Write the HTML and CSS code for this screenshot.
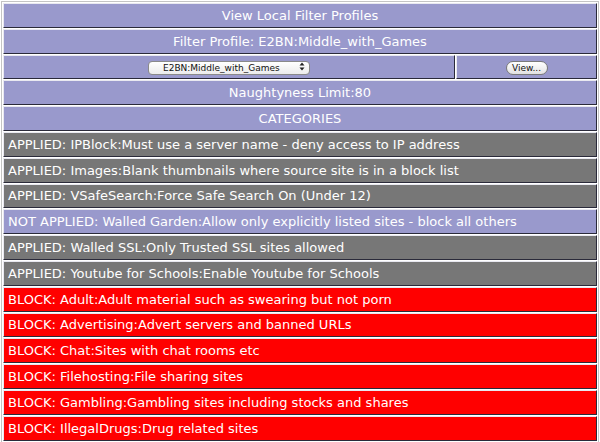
FILE: index.html
```html
<!DOCTYPE html>
<html>
<head>
	<title>Filter Profiles</title>
	<link rel="stylesheet" href="styles.css">
</head>
<body>
	<table class="profiles">
		<tr><td class="head" colspan="2">View Local Filter Profiles</td></tr>
		<tr><td class="head" colspan="2">Filter Profile: E2BN:Middle_with_Games</td></tr>
		<tr>
			<td class="head pick">
				<span class="select-wrap">
					<select class="select">
						<option>E2BN:Middle_with_Games</option>
					</select>
					<svg class="arrows" width="6" height="9" viewBox="0 0 6 9"><path d="M3 0.5L5.5 3.5H0.5Z M3 8.5L5.5 5.5H0.5Z" fill="#222"/></svg>
				</span>
			</td>
			<td class="head view"><button class="btn">View...</button></td>
		</tr>
		<tr><td class="head" colspan="2">Naughtyness Limit:80</td></tr>
		<tr><td class="head" colspan="2">CATEGORIES</td></tr>
		<tr><td class="cat applied" colspan="2">APPLIED: IPBlock:Must use a server name - deny access to IP address</td></tr>
		<tr><td class="cat applied" colspan="2">APPLIED: Images:Blank thumbnails where source site is in a block list</td></tr>
		<tr><td class="cat applied" colspan="2">APPLIED: VSafeSearch:Force Safe Search On (Under 12)</td></tr>
		<tr><td class="cat notapplied" colspan="2">NOT APPLIED: Walled Garden:Allow only explicitly listed sites - block all others</td></tr>
		<tr><td class="cat applied" colspan="2">APPLIED: Walled SSL:Only Trusted SSL sites allowed</td></tr>
		<tr><td class="cat applied" colspan="2">APPLIED: Youtube for Schools:Enable Youtube for Schools</td></tr>
		<tr><td class="cat block" colspan="2">BLOCK: Adult:Adult material such as swearing but not porn</td></tr>
		<tr><td class="cat block" colspan="2">BLOCK: Advertising:Advert servers and banned URLs</td></tr>
		<tr><td class="cat block" colspan="2">BLOCK: Chat:Sites with chat rooms etc</td></tr>
		<tr><td class="cat block" colspan="2">BLOCK: Filehosting:File sharing sites</td></tr>
		<tr><td class="cat block" colspan="2">BLOCK: Gambling:Gambling sites including stocks and shares</td></tr>
		<tr><td class="cat block" colspan="2">BLOCK: IllegalDrugs:Drug related sites</td></tr>
	</table>
</body>
</html>
```

FILE: styles.css
```css
body{
	margin: 1px;
	padding: 0;
	background: #fff;
	font-family: "DejaVu Sans", Verdana, sans-serif;
	color: #fff;
}
.profiles{
	width: 100%;
	border-collapse: separate;
	border-spacing: 1px;
	border: 1px solid #c4c4c4;
}
.profiles td{
	height: 22.8px;
	padding: 0 4px;
	font-size: 13px;
	line-height: 15px;
	border-top: 1px solid #e8e8f0;
	border-left: 1px solid #e8e8f0;
	border-right: 1px solid #2a2a3a;
	border-bottom: 1px solid #2a2a3a;
	white-space: nowrap;
}
.head{
	background: #9999cc;
	text-align: center;
}
.cat{
	text-align: left;
}
.applied{
	background: #777777;
}
.notapplied{
	background: #9999cc;
}
.block{
	background: #ff0000;
}

.pick{
	width: 442px;
}
.select-wrap{
	position: relative;
	display: inline-block;
	vertical-align: middle;
}
.select{
	-webkit-appearance: none;
	appearance: none;
	width: 162px;
	height: 14px;
	padding: 0 0 0 14px;
	margin: 0;
	border: 1px solid #8a8a8a;
	border-radius: 4px;
	background: linear-gradient(#ffffff, #ececec);
	font-family: "DejaVu Sans", Verdana, sans-serif;
	font-size: 9px;
	color: #111;
	line-height: 12px;
}
.arrows{
	position: absolute;
	right: 5px;
	top: 3px;
}
.btn{
	-webkit-appearance: none;
	appearance: none;
	width: 42px;
	height: 14px;
	padding: 0;
	border: 1px solid #7a7a7a;
	border-radius: 7px;
	background: linear-gradient(#ffffff, #e2e2e2);
	font-family: "DejaVu Sans", Verdana, sans-serif;
	font-size: 9px;
	color: #111;
	vertical-align: middle;
}
```
